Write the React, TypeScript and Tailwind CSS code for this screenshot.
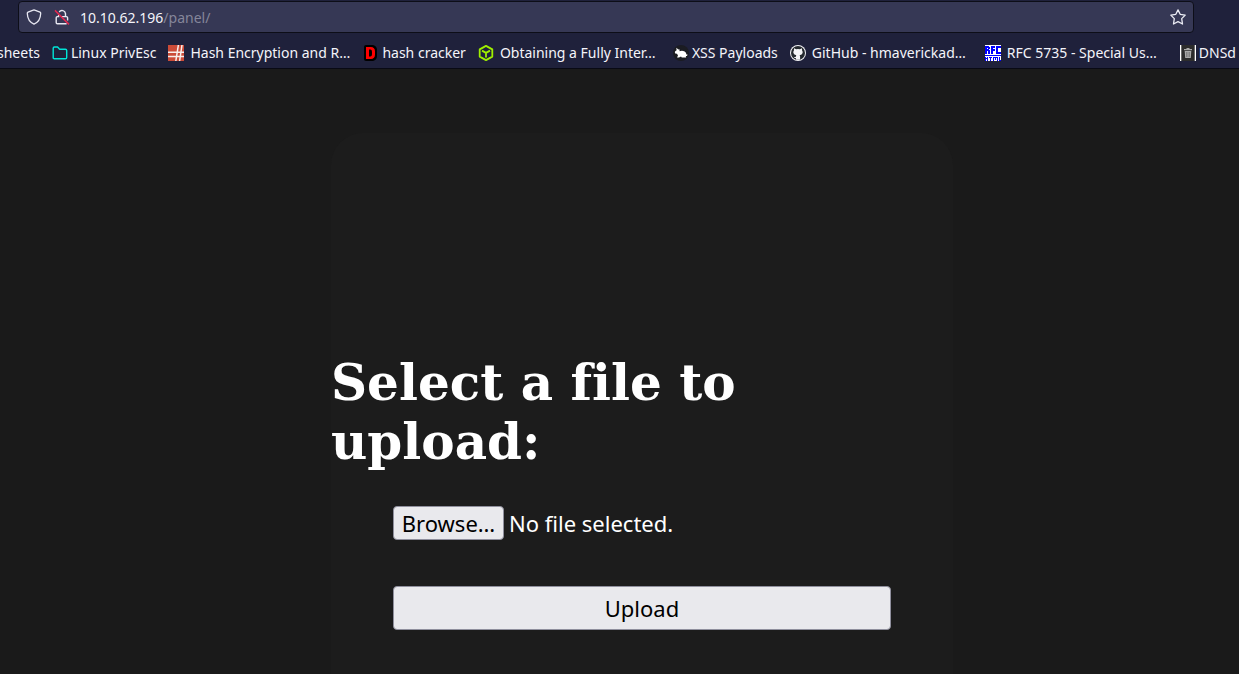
import { useRef, useState } from "react";
import type { ReactNode } from "react";

function ShieldIcon() {
  return (
    <svg width="16" height="16" viewBox="0 0 16 16" fill="none" stroke="#e8e8f2" strokeWidth="1.3" strokeLinejoin="round" aria-hidden="true">
      <path d="M8 .9 L14 3.1 Q14.8 3.5 14.7 4.6 C14.5 9.8 12.4 13.4 8 15.1 C3.6 13.4 1.5 9.8 1.3 4.6 Q1.2 3.5 2 3.1 Z" />
    </svg>
  );
}

function InsecureIcon() {
  return (
    <svg width="16" height="16" viewBox="0 0 16 16" fill="none" aria-hidden="true">
      <path d="M5.2 3 A3.5 3.5 0 0 1 11.5 4.6 V7.6 M7.6 7.6 H12.4 Q13.6 7.6 13.6 8.8 V11.5 M12.6 14.8 H3.4 Q2.2 14.8 2.2 13.6 V8.8 Q2.2 7.6 3.4 7.6 H4.6 V6" stroke="#e8e8f2" strokeWidth="1.4" />
      <path d="M1 1.4 L15 15.4" stroke="#e22850" strokeWidth="1.5" />
    </svg>
  );
}

function StarIcon() {
  return (
    <svg width="16" height="16" viewBox="0 0 16 16" fill="none" stroke="#ecedf5" strokeWidth="1.3" strokeLinejoin="round" aria-hidden="true">
      <path d="M8 .9 L10.2 5.3 L15.2 6.1 L11.7 9.6 L12.5 15 L8 12.6 L3.5 15 L4.3 9.6 L.8 6.1 L5.8 5.3 Z" />
    </svg>
  );
}

function FolderIcon() {
  return (
    <svg width="16" height="16" viewBox="0 0 16 16" fill="none" stroke="#00e5d8" strokeWidth="1.4" strokeLinejoin="round" aria-hidden="true">
      <path d="M1.2 12.8 V3.2 Q1.2 2 2.4 2 H5.6 L7.6 4.2 H13.4 Q14.7 4.2 14.7 5.4 V12.4 Q14.7 13.8 13.4 13.8 H2.4 Q1.2 13.8 1.2 12.8 Z" />
    </svg>
  );
}

function HashIcon() {
  return (
    <svg width="16" height="16" viewBox="0 0 16 16" aria-hidden="true">
      <path d="M0 0 H16 V16 H0 Z" fill="#cb4b38" />
      <path d="M0 7.3 H16 M0 11.4 H16 M10.4 0 L7.8 16 M14 0 L11.6 16" stroke="#f8efec" strokeWidth="1.5" fill="none" />
    </svg>
  );
}

function CrackerIcon() {
  return (
    <svg width="16" height="16" viewBox="0 0 16 16" aria-hidden="true">
      <path d="M3 0 H10 Q14 1 14 5 V11 Q14 15 10 16 H3 Q1 16 1 14 V2 Q1 0 3 0 Z" fill="#000" />
      <path fillRule="evenodd" d="M3 2 H7.8 Q12 2.2 12 6.5 V9.5 Q12 13.8 7.8 14 H3 Z M6 4.6 V11.4 H7.3 Q9 11.4 9 9.2 V6.8 Q9 4.6 7.3 4.6 Z" fill="#ff0000" />
    </svg>
  );
}

function CubeIcon() {
  return (
    <svg width="16" height="16" viewBox="0 0 16 16" fill="none" stroke="#9fef00" strokeWidth="1.8" strokeLinejoin="round" aria-hidden="true">
      <path d="M8 .9 L14.3 4.4 V11.6 L8 15.1 L1.7 11.6 V4.4 Z M4 5.6 L8 7.9 L12 5.6 M8 7.9 V12.4" />
    </svg>
  );
}

function RabbitIcon() {
  return (
    <svg width="16" height="16" viewBox="0 0 16 16" aria-hidden="true">
      <circle cx="8" cy="8" r="8" fill="#1b1c22" />
      <path d="M1.8 7 Q2.3 5.6 3.6 5.2 L3.3 2.8 L5.4 4.4 L6.4 4.2 L6.6 6.2 Q9.4 5.2 11.6 6.6 Q13.4 7.8 13.4 9.4 L14.6 9.6 L14 11 L12.8 11.1 L13.2 12.6 H8.8 L8 11.4 L6 12.6 H4 L5 10.6 L4 8.8 L2.2 8.4 Z" fill="#fff" />
    </svg>
  );
}

function GitHubIcon() {
  return (
    <svg width="16" height="16" viewBox="0 0 16 16" aria-hidden="true">
      <circle cx="8" cy="8" r="8" fill="#f5f5f7" />
      <circle cx="8" cy="8" r="7" fill="#24292e" />
      <path d="M4 3.3 L6.2 4.2 Q8 3.8 9.8 4.2 L12 3.3 L12.1 5.4 Q13 6.4 12.6 8 Q12.1 10 9.6 10.3 Q10.1 10.8 10.1 11.8 V14.4 Q8 15.1 5.9 14.4 V13 Q4.3 13.3 3.7 11.7 Q4.9 12.2 5.9 11.7 Q5.9 10.8 6.4 10.3 Q3.9 10 3.4 8 Q3 6.4 3.9 5.4 Z" fill="#f5f5f7" />
    </svg>
  );
}

function RfcIcon() {
  return (
    <svg width="16" height="16" viewBox="0 0 16 16" shapeRendering="crispEdges" aria-hidden="true">
      <path d="M0 0 H16 V16 H0 Z" fill="#fff" />
      <path d="M1 9 V1 M0 2 H4 M4 2 V4 M2 5 H4 M4 5 V9 M7 9 V1 M6 2 H10 M8 5 H10 M16 2 H12 V8 H16" stroke="#0000ff" strokeWidth="2" fill="none" />
      <path d="M0 10.5 H16 M.5 12 V16 M2.5 12 V16 M.5 13.5 H3 M4 12.5 H7 M5.5 12 V16 M8.5 16 V12.5 H12 M10.5 12 V15 M12.5 12 V16 M14.5 12 V15.5 H16" stroke="#0000ff" fill="none" />
    </svg>
  );
}

function TrashIcon() {
  return (
    <svg width="16" height="16" viewBox="0 0 16 16" aria-hidden="true">
      <path d="M0 0 H16 V16 H0 Z" fill="#2c2c2c" />
      <path d="M0 0 H1.3 V16 H0 Z M14.7 0 H16 V16 H14.7 Z" fill="#fff" />
      <path d="M6.5 3 H9.5 V4 H12 V5.3 H4 V4 H6.5 Z M4.7 6 H11.3 L10.8 13 H5.2 Z" fill="#aaa" />
      <path d="M6.5 7 V12 M8 7 V12 M9.5 7 V12" stroke="#666" strokeWidth=".6" />
    </svg>
  );
}

type Bookmark = { label: string; icon?: ReactNode; long?: boolean };

const bookmarks: Bookmark[] = [
  { label: "sheets" },
  { label: "Linux PrivEsc", icon: <FolderIcon /> },
  { label: "Hash Encryption and R…", icon: <HashIcon />, long: true },
  { label: "hash cracker", icon: <CrackerIcon /> },
  { label: "Obtaining a Fully Inter…", icon: <CubeIcon />, long: true },
  { label: "XSS Payloads", icon: <RabbitIcon /> },
  { label: "GitHub - hmaverickad…", icon: <GitHubIcon />, long: true },
  { label: "RFC 5735 - Special Us…", icon: <RfcIcon />, long: true },
  { label: "DNSd", icon: <TrashIcon /> },
];

function BrowserBar() {
  return (
    <header className="overflow-hidden border-b border-[#090a14] bg-[#1f213b] text-[#f4f4fa]">
      <div className="mt-px mr-[45px] ml-[18px] flex h-8 items-center rounded-sm border border-[#0d0e18] bg-[#363855] px-[7px]">
        <ShieldIcon />
        <span className="ml-3 flex">
          <InsecureIcon />
        </span>
        <p className="ml-[10px] flex-1 pt-0.5 text-sm">
          10.10.62.196<span className="text-[#85869a]">/panel/</span>
        </p>
        <button type="button" aria-label="Bookmark this page" className="flex">
          <StarIcon />
        </button>
      </div>
      <nav aria-label="Bookmarks" className="-ml-[3px] flex h-[35px] items-center gap-3 pt-1.5 pb-0.5 text-sm whitespace-nowrap">
        {bookmarks.map(({ label, icon, long }) => (
          <a key={label} href="#" className={long ? "flex w-[183px] shrink-0 items-center gap-1.5" : "flex shrink-0 items-center gap-[3px]"}>
            {icon}
            <span>{label}</span>
          </a>
        ))}
      </nav>
    </header>
  );
}

export default function App() {
  const picker = useRef<HTMLInputElement>(null);
  const [fileName, setFileName] = useState("No file selected.");

  return (
    <div className="flex min-h-screen flex-col bg-[#1a1a1a] font-['Noto_Sans',sans-serif]">
      <BrowserBar />
      <main className="flex flex-1 flex-col overflow-hidden pt-16 pl-[45px]">
        <form
          className="mx-auto w-full max-w-[622px] flex-1 rounded-t-[32px] bg-[#1c1c1c] pt-[220px] text-white"
          onSubmit={(event) => event.preventDefault()}
        >
          <h1 className="font-['DejaVu_Serif',serif] text-[50px] leading-[59px] font-bold [font-variant-ligatures:none]">
            Select a file to upload:
          </h1>
          <div className="flex flex-col gap-[46px] px-[62px] pt-[35px] pb-11 text-[22px]">
            <div className="flex items-center gap-[5px]">
              <button
                type="button"
                onClick={() => picker.current?.click()}
                className="flex h-[34px] w-[111px] items-center justify-center rounded-sm border border-[#8f8f9d] bg-[#e9e9ed] text-black"
              >
                Browse…
              </button>
              <input
                ref={picker}
                type="file"
                aria-label="File"
                className="hidden"
                onChange={(event) => setFileName(event.target.files?.[0]?.name ?? "No file selected.")}
              />
              <span>{fileName}</span>
            </div>
            <button type="submit" className="h-11 rounded-sm border border-[#8f8f9d] bg-[#e9e9ed] text-black">
              Upload
            </button>
          </div>
        </form>
      </main>
    </div>
  );
}
